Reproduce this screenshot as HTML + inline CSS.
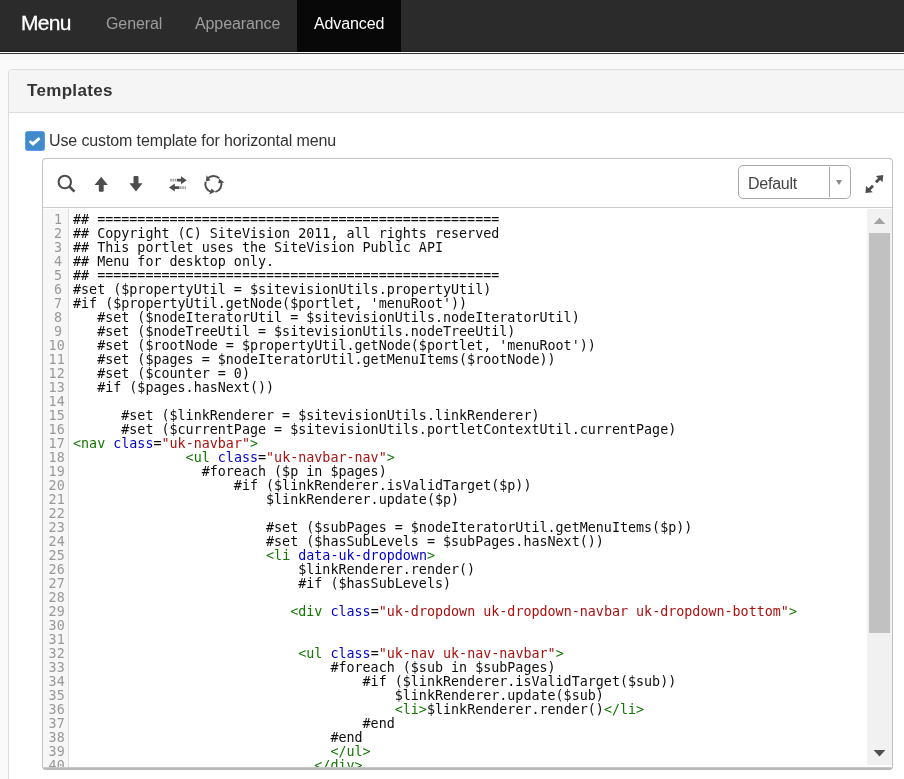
<!DOCTYPE html>
<html lang="en">
<head>
<meta charset="utf-8">
<title>Menu</title>
<style>
html,body{margin:0;padding:0;}
body{width:904px;height:779px;overflow:hidden;background:#fafafa;font-family:"Liberation Sans",Arial,Helvetica,sans-serif;color:#333;position:relative;}
.abs{position:absolute;}
#brand,.tab,#ptitle,#cblabel,#seltxt,#nums,#code{will-change:transform;}
#nav{left:0;top:0;width:904px;height:51px;background:#2b2b2b;border-bottom:1px solid #1c1c1c;box-sizing:content-box;}
#navline{left:0;top:52px;width:904px;height:1px;background:#fff;border-top:0;border-bottom:1px solid #fff;}#navline2{left:0;top:53px;width:904px;height:1px;background:#333;}
#brand{left:21px;top:10.6px;font-size:21px;line-height:24px;letter-spacing:-0.7px;-webkit-text-stroke:0.3px #fff;color:#fff;white-space:nowrap;}
.tab{top:14px;font-size:16px;line-height:20px;color:#9d9d9d;white-space:nowrap;letter-spacing:-0.1px;}
#tabact{left:297px;top:0;width:104px;height:51px;background:#080808;border-bottom:1px solid #020202;}
#panel{left:8px;top:69px;width:920px;height:740px;background:#fff;border:1px solid #ddd;border-radius:4px;box-sizing:border-box;}
#phead{left:0;top:0;width:918px;height:42px;background:#f5f5f5;border-bottom:1px solid #ddd;border-radius:3px 3px 0 0;}
#ptitle{left:18px;top:10px;font-size:17px;line-height:22px;font-weight:bold;color:#333;white-space:nowrap;letter-spacing:.32px;}
#cb{left:25px;top:131px;width:18px;height:18px;background:#428bca;border:1px solid #5b9df3;border-radius:2.5px;}
#cblabel{left:48.5px;top:131px;font-size:16px;line-height:20px;color:#333;white-space:nowrap;letter-spacing:-0.12px;}
#editor{left:42px;top:158px;width:851px;height:612px;box-sizing:border-box;border:1px solid #c2c2c2;border-bottom:2px solid #b9b9b9;border-radius:4px;background:#fff;overflow:hidden;}#botline{left:0;top:608px;width:849px;height:1px;background:#c6c6c6;}
#tbline{left:0;top:48px;width:849px;height:1px;background:#ccc;}
#sel{left:695px;top:6px;width:113px;height:34px;box-sizing:border-box;border:1px solid #aaa;border-radius:5px;background:#fff;}
#seltxt{left:9px;top:8px;font-size:16px;line-height:20px;color:#444;letter-spacing:-0.25px;}
#seldiv{left:90px;top:1px;width:1px;height:30px;background:#aaa;}
#selarr{left:97px;top:14px;width:0;height:0;border-left:3.6px solid transparent;border-right:3.6px solid transparent;border-top:5px solid #888;}
#gutter{left:0;top:50px;width:25px;height:558px;background:#f7f7f7;border-right:1px solid #ddd;}
.d1{padding-right:2.7px;}#nums{left:0;top:54px;width:21.7px;text-align:right;color:#999;}
#code{left:30px;top:54px;color:#0d0d0d;}
#nums,#code{font-family:"DejaVu Sans Mono","Liberation Mono",monospace;font-size:13.37px;line-height:14px;white-space:pre;margin:0;}
.t{color:#117700;}.a{color:#0000cc;}.s{color:#aa1111;}
#sbtrack{left:824px;top:50px;width:25px;height:556px;background:#f1f1f1;}
#sbthumb{left:826px;top:74px;width:21px;height:400px;background:#c1c1c1;}
</style>
</head>
<body>
<div id="nav" class="abs"></div>
<div id="navline" class="abs"></div><div id="navline2" class="abs"></div>
<div id="tabact" class="abs"></div>
<div id="brand" class="abs">Menu</div>
<div class="abs tab" style="left:106px">General</div>
<div class="abs tab" style="left:195px">Appearance</div>
<div class="abs tab" style="left:314px;color:#fff">Advanced</div>

<div id="panel" class="abs">
  <div id="phead" class="abs"><div id="ptitle" class="abs">Templates</div></div>
</div>

<div id="cb" class="abs"><svg width="18" height="18" viewBox="26 132 18 18" style="position:absolute;left:0;top:0"><polygon points="28.8,142.1 30.4,140.3 32.8,141.9 38.8,137 40.4,139.3 33,145.9" fill="#fff"/></svg></div>
<div id="cblabel" class="abs">Use custom template for horizontal menu</div>

<div id="editor" class="abs">
  <div id="tbline" class="abs"></div>
  <div id="sel" class="abs"><div id="seltxt" class="abs">Default</div><div id="seldiv" class="abs"></div><div id="selarr" class="abs"></div></div>
  <div id="gutter" class="abs"></div>
  <pre id="nums" class="abs"><span class="d1">1</span>
<span class="d1">2</span>
<span class="d1">3</span>
<span class="d1">4</span>
<span class="d1">5</span>
<span class="d1">6</span>
<span class="d1">7</span>
<span class="d1">8</span>
<span class="d1">9</span>
10
11
12
13
14
15
16
17
18
19
20
21
22
23
24
25
26
27
28
29
30
31
32
33
34
35
36
37
38
39
40</pre>
  <pre id="code" class="abs">## ==================================================
## Copyright (C) SiteVision 2011, all rights reserved
## This portlet uses the SiteVision Public API
## Menu for desktop only.
## ==================================================
#set ($propertyUtil = $sitevisionUtils.propertyUtil)
#if ($propertyUtil.getNode($portlet, 'menuRoot'))
   #set ($nodeIteratorUtil = $sitevisionUtils.nodeIteratorUtil)
   #set ($nodeTreeUtil = $sitevisionUtils.nodeTreeUtil)
   #set ($rootNode = $propertyUtil.getNode($portlet, 'menuRoot'))
   #set ($pages = $nodeIteratorUtil.getMenuItems($rootNode))
   #set ($counter = 0)
   #if ($pages.hasNext())

      #set ($linkRenderer = $sitevisionUtils.linkRenderer)
      #set ($currentPage = $sitevisionUtils.portletContextUtil.currentPage)
<span class="t">&lt;nav</span> <span class="a">class</span>=<span class="s">"uk-navbar"</span><span class="t">&gt;</span>
              <span class="t">&lt;ul</span> <span class="a">class</span>=<span class="s">"uk-navbar-nav"</span><span class="t">&gt;</span>
                #foreach ($p in $pages)
                    #if ($linkRenderer.isValidTarget($p))
                        $linkRenderer.update($p)

                        #set ($subPages = $nodeIteratorUtil.getMenuItems($p))
                        #set ($hasSubLevels = $subPages.hasNext())
                        <span class="t">&lt;li</span> <span class="a">data-uk-dropdown</span><span class="t">&gt;</span>
                            $linkRenderer.render()
                            #if ($hasSubLevels)

                           <span class="t">&lt;div</span> <span class="a">class</span>=<span class="s">"uk-dropdown uk-dropdown-navbar uk-dropdown-bottom"</span><span class="t">&gt;</span>


                            <span class="t">&lt;ul</span> <span class="a">class</span>=<span class="s">"uk-nav uk-nav-navbar"</span><span class="t">&gt;</span>
                                #foreach ($sub in $subPages)
                                    #if ($linkRenderer.isValidTarget($sub))
                                        $linkRenderer.update($sub)
                                        <span class="t">&lt;li&gt;</span>$linkRenderer.render()<span class="t">&lt;/li&gt;</span>
                                    #end
                                #end
                                <span class="t">&lt;/ul&gt;</span>
                              <span class="t">&lt;/div&gt;</span></pre>
  <div id="sbtrack" class="abs"></div><div id="botline" class="abs"></div>
  <div id="sbthumb" class="abs"></div>
</div>
<svg class="abs" style="left:0;top:0" width="904" height="779" viewBox="0 0 904 779">
<g fill="#4d4d4d" stroke="none">
<!-- search -->
<circle cx="64.8" cy="182" r="6.2" fill="none" stroke="#4d4d4d" stroke-width="2.1"/>
<path d="M69.2 186.4 L74.5 191.6" fill="none" stroke="#4d4d4d" stroke-width="2.7" stroke-linecap="butt"/>
<!-- arrow up -->
<path d="M101.2 176.7 L107.8 184.9 L103.7 184.9 L103.7 190.8 Q103.7 191.8 102.7 191.8 L99.8 191.8 Q98.8 191.8 98.8 190.8 L98.8 184.9 L94.6 184.9 Z"/>
<!-- arrow down -->
<path d="M136 191.5 L129.4 183.2 L133.5 183.2 L133.5 177 Q133.5 176 134.5 176 L137.5 176 Q138.5 176 138.5 177 L138.5 183.2 L142.5 183.2 Z"/>
<!-- transfer -->
<path d="M177 178.8 H181 V176.2 L186.7 180.2 L181 184.2 V181.6 H177 Z"/>
<path d="M170.2 178.8 h1.6 v2.8 h-1.6 z M172.5 178.8 h1.6 v2.8 h-1.6 z M174.8 178.8 h1.6 v2.8 h-1.6 z" fill="#a0a0a0"/>
<path d="M179.4 186.2 H174.8 V183.6 L169 187.6 L174.8 191.6 V189 H179.4 Z"/>
<path d="M180 186.2 h1.6 v2.8 h-1.6 z M182.3 186.2 h1.6 v2.8 h-1.6 z M184.6 186.2 h1.4 v2.8 h-1.4 z" fill="#a0a0a0"/>
<!-- expand -->
<polygon points="875.9,176 883.3,175 882.5,182.3"/>
<path d="M876 182.2 L880.6 177.6" fill="none" stroke="#4d4d4d" stroke-width="2.8"/>
<polygon points="866.1,185.9 865.4,193 872.7,192.2"/>
<path d="M873 185.7 L868.2 190.5" fill="none" stroke="#4d4d4d" stroke-width="2.8"/>
</g>
<!-- refresh -->
<path d="M219.23 178.37 A8.10 8.10 0 0 0 207.77 178.17" fill="none" stroke="#4d4d4d" stroke-width="2"/>
<polygon points="205.98,181.59 210.44,180.22 206.50,175.17" fill="#4d4d4d"/>
<path d="M215.36 191.86 A8.10 8.10 0 0 0 221.26 182.04" fill="none" stroke="#4d4d4d" stroke-width="2"/>
<polygon points="219.20,178.78 218.15,183.33 224.49,182.44" fill="#4d4d4d"/>
<path d="M205.61 181.77 A8.10 8.10 0 0 0 211.17 191.79" fill="none" stroke="#4d4d4d" stroke-width="2"/>
<polygon points="215.02,191.63 211.60,188.45 209.20,194.38" fill="#4d4d4d"/>
<!-- scrollbar arrows -->
<polygon points="879.5,217.8 873.7,224 885.3,224" fill="#a3a3a3"/>
<polygon points="873.6,750 885.4,750 879.5,756.4" fill="#505050"/>
</svg>
</body>
</html>
